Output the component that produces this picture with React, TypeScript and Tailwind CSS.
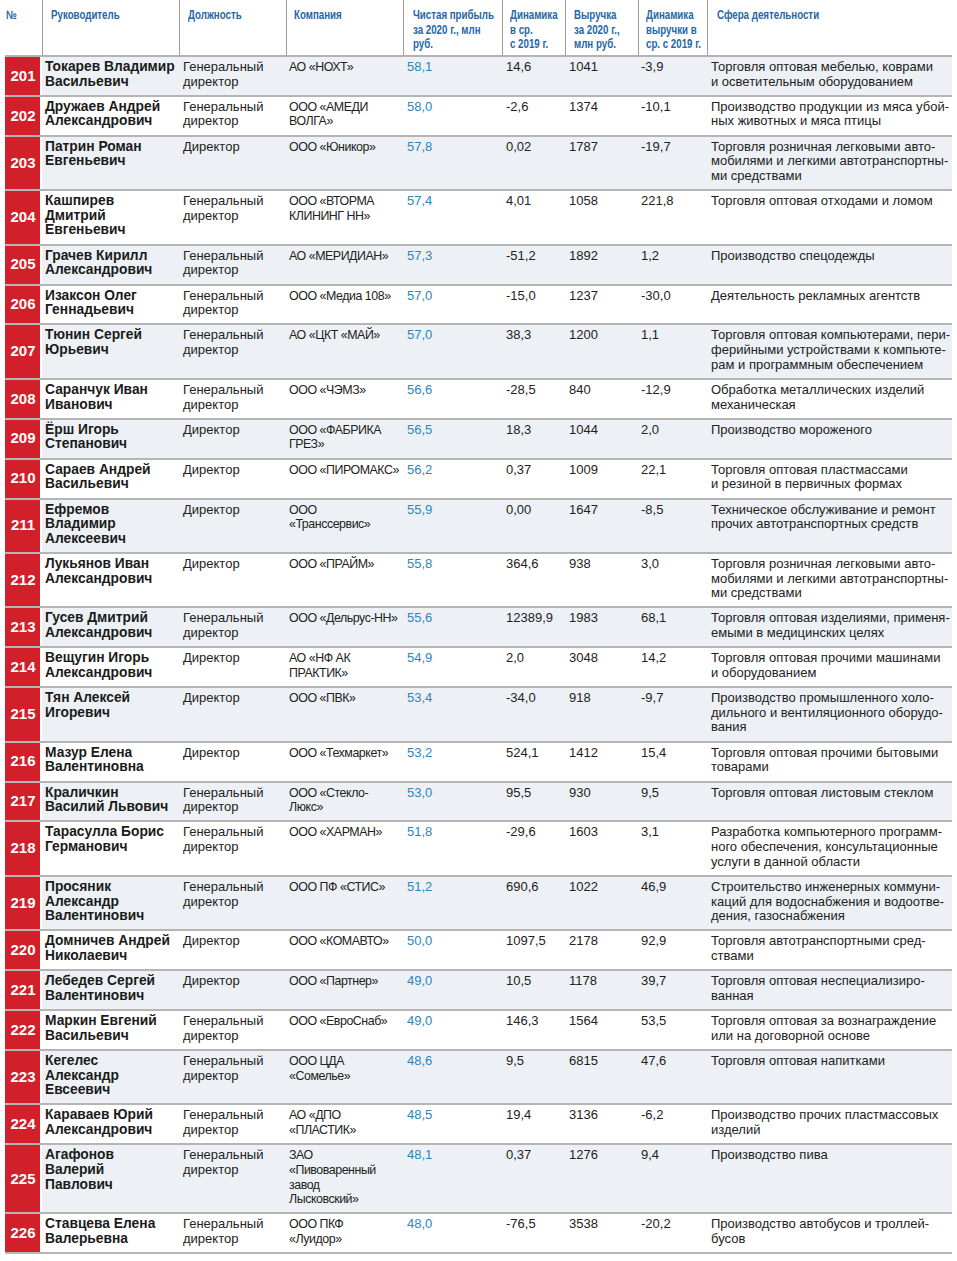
import React from "react";

type Row = {
  n: number;
  name: string[];
  pos: string[];
  comp: string[];
  profit: string;
  dyn: string;
  rev: string;
  dynRev: string;
  sphere: string[];
};

const GD = ["Генеральный", "директор"];
const D = ["Директор"];

const rows: Row[] = [
  { n: 201, name: ["Токарев Владимир", "Васильевич"], pos: GD, comp: ["АО «НОХТ»"], profit: "58,1", dyn: "14,6", rev: "1041", dynRev: "-3,9", sphere: ["Торговля оптовая мебелью, коврами", "и осветительным оборудованием"] },
  { n: 202, name: ["Дружаев Андрей", "Александрович"], pos: GD, comp: ["ООО «АМЕДИ", "ВОЛГА»"], profit: "58,0", dyn: "-2,6", rev: "1374", dynRev: "-10,1", sphere: ["Производство продукции из мяса убой-", "ных животных и мяса птицы"] },
  { n: 203, name: ["Патрин Роман", "Евгеньевич"], pos: D, comp: ["ООО «Юникор»"], profit: "57,8", dyn: "0,02", rev: "1787", dynRev: "-19,7", sphere: ["Торговля розничная легковыми авто-", "мобилями и легкими автотранспортны-", "ми средствами"] },
  { n: 204, name: ["Кашпирев", "Дмитрий", "Евгеньевич"], pos: GD, comp: ["ООО «ВТОРМА", "КЛИНИНГ НН»"], profit: "57,4", dyn: "4,01", rev: "1058", dynRev: "221,8", sphere: ["Торговля оптовая отходами и ломом"] },
  { n: 205, name: ["Грачев Кирилл", "Александрович"], pos: GD, comp: ["АО «МЕРИДИАН»"], profit: "57,3", dyn: "-51,2", rev: "1892", dynRev: "1,2", sphere: ["Производство спецодежды"] },
  { n: 206, name: ["Изаксон Олег", "Геннадьевич"], pos: GD, comp: ["ООО «Медиа 108»"], profit: "57,0", dyn: "-15,0", rev: "1237", dynRev: "-30,0", sphere: ["Деятельность рекламных агентств"] },
  { n: 207, name: ["Тюнин Сергей", "Юрьевич"], pos: GD, comp: ["АО «ЦКТ «МАЙ»"], profit: "57,0", dyn: "38,3", rev: "1200", dynRev: "1,1", sphere: ["Торговля оптовая компьютерами, пери-", "ферийными устройствами к компьюте-", "рам и программным обеспечением"] },
  { n: 208, name: ["Саранчук Иван", "Иванович"], pos: GD, comp: ["ООО «ЧЭМЗ»"], profit: "56,6", dyn: "-28,5", rev: "840", dynRev: "-12,9", sphere: ["Обработка металлических изделий", "механическая"] },
  { n: 209, name: ["Ёрш Игорь", "Степанович"], pos: D, comp: ["ООО «ФАБРИКА", "ГРЕЗ»"], profit: "56,5", dyn: "18,3", rev: "1044", dynRev: "2,0", sphere: ["Производство мороженого"] },
  { n: 210, name: ["Сараев Андрей", "Васильевич"], pos: D, comp: ["ООО «ПИРОМАКС»"], profit: "56,2", dyn: "0,37", rev: "1009", dynRev: "22,1", sphere: ["Торговля оптовая пластмассами", "и резиной в первичных формах"] },
  { n: 211, name: ["Ефремов", "Владимир", "Алексеевич"], pos: D, comp: ["ООО", "«Транссервис»"], profit: "55,9", dyn: "0,00", rev: "1647", dynRev: "-8,5", sphere: ["Техническое обслуживание и ремонт", "прочих автотранспортных средств"] },
  { n: 212, name: ["Лукьянов Иван", "Александрович"], pos: D, comp: ["ООО «ПРАЙМ»"], profit: "55,8", dyn: "364,6", rev: "938", dynRev: "3,0", sphere: ["Торговля розничная легковыми авто-", "мобилями и легкими автотранспортны-", "ми средствами"] },
  { n: 213, name: ["Гусев Дмитрий", "Александрович"], pos: GD, comp: ["ООО «Дельрус-НН»"], profit: "55,6", dyn: "12389,9", rev: "1983", dynRev: "68,1", sphere: ["Торговля оптовая изделиями, применя-", "емыми в медицинских целях"] },
  { n: 214, name: ["Вещугин Игорь", "Александрович"], pos: D, comp: ["АО «НФ АК", "ПРАКТИК»"], profit: "54,9", dyn: "2,0", rev: "3048", dynRev: "14,2", sphere: ["Торговля оптовая прочими машинами", "и оборудованием"] },
  { n: 215, name: ["Тян Алексей", "Игоревич"], pos: D, comp: ["ООО «ПВК»"], profit: "53,4", dyn: "-34,0", rev: "918", dynRev: "-9,7", sphere: ["Производство промышленного холо-", "дильного и вентиляционного оборудо-", "вания"] },
  { n: 216, name: ["Мазур Елена", "Валентиновна"], pos: D, comp: ["ООО «Техмаркет»"], profit: "53,2", dyn: "524,1", rev: "1412", dynRev: "15,4", sphere: ["Торговля оптовая прочими бытовыми", "товарами"] },
  { n: 217, name: ["Краличкин", "Василий Львович"], pos: GD, comp: ["ООО «Стекло-", "Люкс»"], profit: "53,0", dyn: "95,5", rev: "930", dynRev: "9,5", sphere: ["Торговля оптовая листовым стеклом"] },
  { n: 218, name: ["Тарасулла Борис", "Германович"], pos: GD, comp: ["ООО «ХАРМАН»"], profit: "51,8", dyn: "-29,6", rev: "1603", dynRev: "3,1", sphere: ["Разработка компьютерного программ-", "ного обеспечения, консультационные", "услуги в данной области"] },
  { n: 219, name: ["Просяник", "Александр", "Валентинович"], pos: GD, comp: ["ООО ПФ «СТИС»"], profit: "51,2", dyn: "690,6", rev: "1022", dynRev: "46,9", sphere: ["Строительство инженерных коммуни-", "каций для водоснабжения и водоотве-", "дения, газоснабжения"] },
  { n: 220, name: ["Домничев Андрей", "Николаевич"], pos: D, comp: ["ООО «КОМАВТО»"], profit: "50,0", dyn: "1097,5", rev: "2178", dynRev: "92,9", sphere: ["Торговля автотранспортными сред-", "ствами"] },
  { n: 221, name: ["Лебедев Сергей", "Валентинович"], pos: D, comp: ["ООО «Партнер»"], profit: "49,0", dyn: "10,5", rev: "1178", dynRev: "39,7", sphere: ["Торговля оптовая неспециализиро-", "ванная"] },
  { n: 222, name: ["Маркин Евгений", "Васильевич"], pos: GD, comp: ["ООО «ЕвроСнаб»"], profit: "49,0", dyn: "146,3", rev: "1564", dynRev: "53,5", sphere: ["Торговля оптовая за вознаграждение", "или на договорной основе"] },
  { n: 223, name: ["Кегелес", "Александр", "Евсеевич"], pos: GD, comp: ["ООО ЦДА", "«Сомелье»"], profit: "48,6", dyn: "9,5", rev: "6815", dynRev: "47,6", sphere: ["Торговля оптовая напитками"] },
  { n: 224, name: ["Караваев Юрий", "Александрович"], pos: GD, comp: ["АО «ДПО", "«ПЛАСТИК»"], profit: "48,5", dyn: "19,4", rev: "3136", dynRev: "-6,2", sphere: ["Производство прочих пластмассовых", "изделий"] },
  { n: 225, name: ["Агафонов", "Валерий", "Павлович"], pos: GD, comp: ["ЗАО", "«Пивоваренный", "завод", "Лысковский»"], profit: "48,1", dyn: "0,37", rev: "1276", dynRev: "9,4", sphere: ["Производство пива"] },
  { n: 226, name: ["Ставцева Елена", "Валерьевна"], pos: GD, comp: ["ООО ПКФ", "«Луидор»"], profit: "48,0", dyn: "-76,5", rev: "3538", dynRev: "-20,2", sphere: ["Производство автобусов и троллей-", "бусов"] },
];

const grid =
  "grid grid-cols-[37px_137px_107px_117px_99px_63px_73px_69px_245px]";

function Lines({ lines }: { lines: string[] }) {
  return (
    <>
      {lines.map((l, i) => (
        <div key={i} className="whitespace-nowrap">
          {l}
        </div>
      ))}
    </>
  );
}

// narrow bold heading text, squeezed to look like a condensed face
function H({ lines }: { lines: string[] }) {
  return (
    <>
      {lines.map((l, i) => (
        <div key={i} className="whitespace-nowrap">
          <span className="inline-block origin-left scale-x-[0.81]">{l}</span>
        </div>
      ))}
    </>
  );
}

function Header() {
  const head = "border-l border-[#9d9d9d] pt-[8px]";
  return (
    <div className={`${grid} border-b-2 border-[#b3b3b3] h-[57px] text-[12px] leading-[14.5px] font-bold text-[#2467a6]`}>
      <div className="pt-[8px] pl-[1px]">
        <H lines={["№"]} />
      </div>
      <div className={`${head} pl-[8px]`}>
        <H lines={["Руководитель"]} />
      </div>
      <div className={`${head} pl-[8px]`}>
        <H lines={["Должность"]} />
      </div>
      <div className={`${head} pl-[7px]`}>
        <H lines={["Компания"]} />
      </div>
      <div className={`${head} pl-[9px]`}>
        <H lines={["Чистая прибыль", "за 2020 г., млн", "руб."]} />
      </div>
      <div className={`${head} pl-[7px]`}>
        <H lines={["Динамика", "в ср.", "с 2019 г."]} />
      </div>
      <div className={`${head} pl-[8px]`}>
        <H lines={["Выручка", "за 2020 г.,", "млн руб."]} />
      </div>
      <div className={`${head} pl-[7px]`}>
        <H lines={["Динамика", "выручки в", "ср. с 2019 г."]} />
      </div>
      <div className={`${head} pl-[9px]`}>
        <H lines={["Сфера деятельности"]} />
      </div>
    </div>
  );
}

function TableRow({ row, shaded }: { row: Row; shaded: boolean }) {
  const cell = "pt-[3px] pb-[5.7px]";
  return (
    <div
      className={`${grid} border-b-2 border-[#b5b5b5] ${shaded ? "bg-[#edf1f5]" : "bg-white"} text-[13px] leading-[14.6px] text-[#222]`}
    >
      <div className="bg-[#d2202b] border-r-2 border-white flex items-center justify-center text-white font-bold text-[15px] pl-[1px]">
        {row.n}
      </div>
      <div className={`${cell} pl-[3px] font-bold text-[13.8px] text-[#1b1b1b]`}>
        <Lines lines={row.name} />
      </div>
      <div className={`${cell} pl-[4px]`}>
        <Lines lines={row.pos} />
      </div>
      <div className={`${cell} pl-[3px] text-[12.4px] tracking-[-0.45px]`}>
        <Lines lines={row.comp} />
      </div>
      <div className={`${cell} pl-[4px] text-[#2c86c2]`}>{row.profit}</div>
      <div className={`${cell} pl-[4px]`}>{row.dyn}</div>
      <div className={`${cell} pl-[4px]`}>{row.rev}</div>
      <div className={`${cell} pl-[3px]`}>{row.dynRev}</div>
      <div className={`${cell} pl-[4px]`}>
        <Lines lines={row.sphere} />
      </div>
    </div>
  );
}

export default function App() {
  return (
    <div
      className="bg-white w-[957px] min-h-[1261px] pl-[5px]"
      style={{ fontFamily: '"Liberation Sans", Arial, sans-serif' }}
    >
      <div className="w-[947px]">
        <Header />
        {rows.map((r, i) => (
          <TableRow key={r.n} row={r} shaded={i % 2 === 0} />
        ))}
      </div>
    </div>
  );
}
